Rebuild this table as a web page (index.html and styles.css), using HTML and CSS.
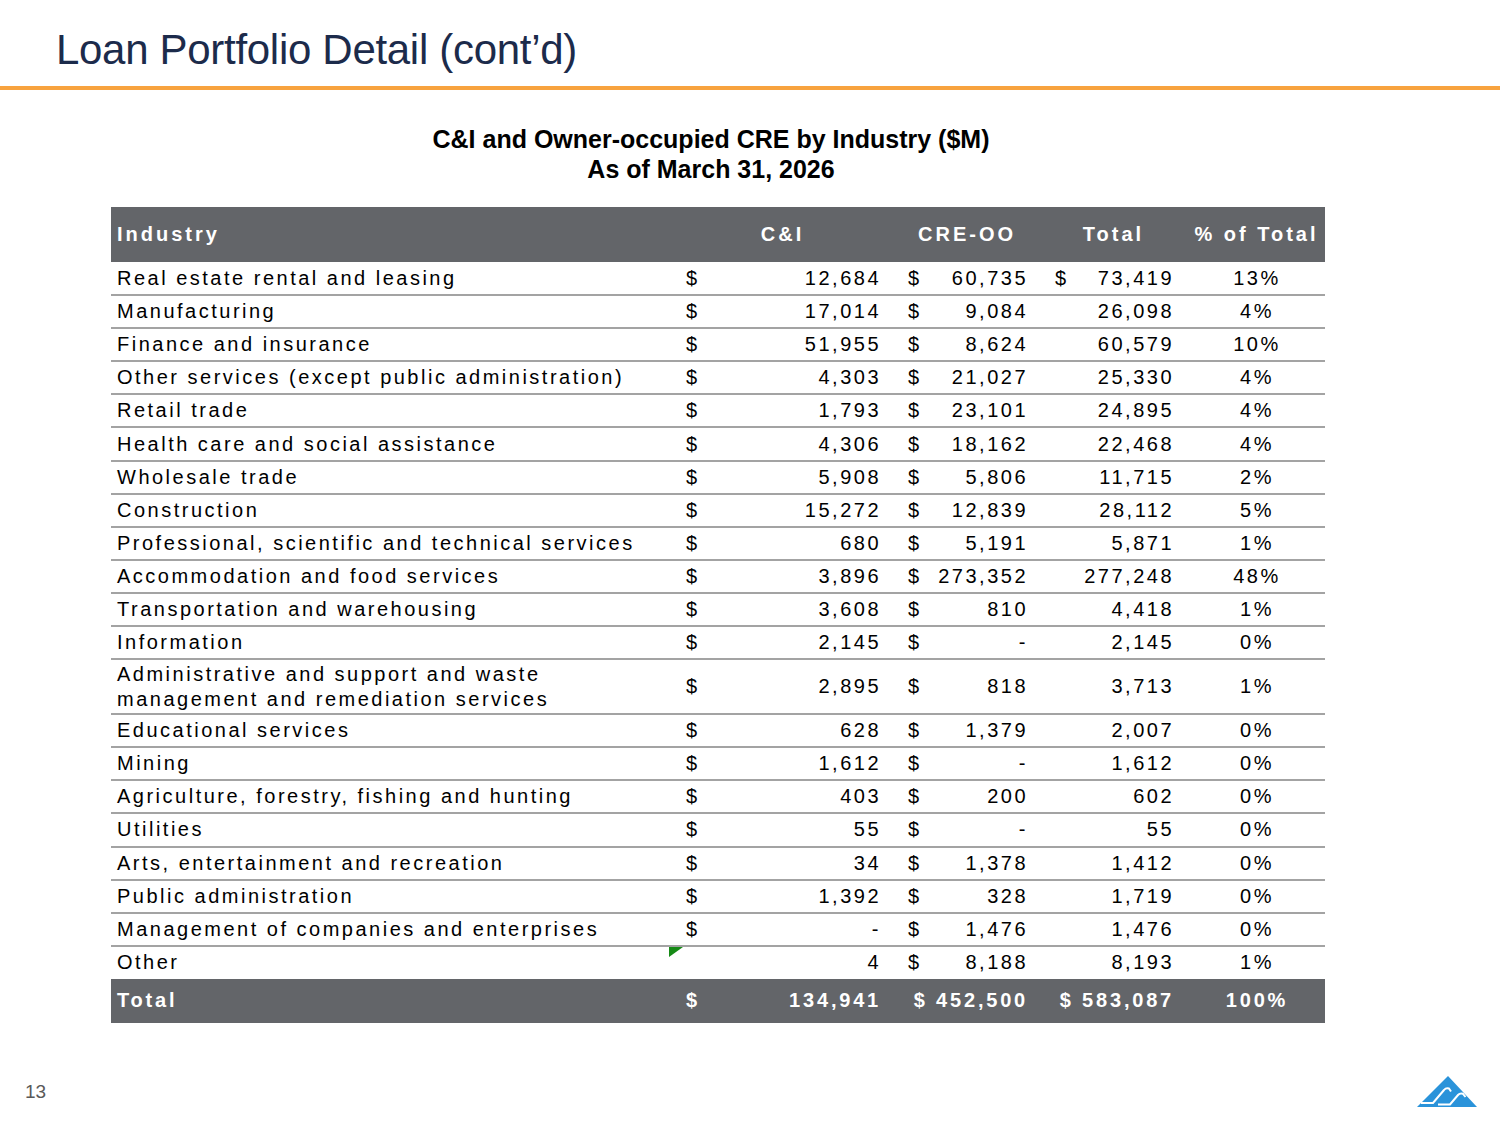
FILE: index.html
```html
<!DOCTYPE html>
<html lang="en">
<head>
<meta charset="utf-8">
<title>Loan Portfolio Detail (cont'd)</title>
<link rel="stylesheet" href="styles.css">
</head>
<body>
<div class="page">
  <h1 class="title">Loan Portfolio Detail (cont’d)</h1>
  <div class="rule"></div>
  <div class="subtitle">C&amp;I and Owner-occupied CRE by Industry ($M)<br>As of March 31, 2026</div>
  <table class="loans">
    <colgroup>
      <col class="c-ind"><col class="c-dol"><col class="c-cni"><col class="c-cre"><col class="c-tot"><col class="c-pct">
    </colgroup>
    <thead>
      <tr class="head">
        <th class="ind">Industry</th>
        <th colspan="2" class="h-cni">C&amp;I</th>
        <th class="h-cre">CRE-OO</th>
        <th class="h-tot">Total</th>
        <th class="h-pct">% of Total</th>
      </tr>
    </thead>
    <tbody>
      <tr><td class="ind">Real estate rental and leasing</td><td class="dol">$</td><td class="num">12,684</td><td class="cur"><span class="d">$</span>60,735</td><td class="cur"><span class="d">$</span>73,419</td><td class="pct">13%</td></tr>
      <tr><td class="ind">Manufacturing</td><td class="dol">$</td><td class="num">17,014</td><td class="cur"><span class="d">$</span>9,084</td><td class="cur">26,098</td><td class="pct">4%</td></tr>
      <tr><td class="ind">Finance and insurance</td><td class="dol">$</td><td class="num">51,955</td><td class="cur"><span class="d">$</span>8,624</td><td class="cur">60,579</td><td class="pct">10%</td></tr>
      <tr><td class="ind">Other services (except public administration)</td><td class="dol">$</td><td class="num">4,303</td><td class="cur"><span class="d">$</span>21,027</td><td class="cur">25,330</td><td class="pct">4%</td></tr>
      <tr><td class="ind">Retail trade</td><td class="dol">$</td><td class="num">1,793</td><td class="cur"><span class="d">$</span>23,101</td><td class="cur">24,895</td><td class="pct">4%</td></tr>
      <tr><td class="ind">Health care and social assistance</td><td class="dol">$</td><td class="num">4,306</td><td class="cur"><span class="d">$</span>18,162</td><td class="cur">22,468</td><td class="pct">4%</td></tr>
      <tr><td class="ind">Wholesale trade</td><td class="dol">$</td><td class="num">5,908</td><td class="cur"><span class="d">$</span>5,806</td><td class="cur">11,715</td><td class="pct">2%</td></tr>
      <tr><td class="ind">Construction</td><td class="dol">$</td><td class="num">15,272</td><td class="cur"><span class="d">$</span>12,839</td><td class="cur">28,112</td><td class="pct">5%</td></tr>
      <tr><td class="ind">Professional, scientific and technical services</td><td class="dol">$</td><td class="num">680</td><td class="cur"><span class="d">$</span>5,191</td><td class="cur">5,871</td><td class="pct">1%</td></tr>
      <tr><td class="ind">Accommodation and food services</td><td class="dol">$</td><td class="num">3,896</td><td class="cur"><span class="d">$</span>273,352</td><td class="cur">277,248</td><td class="pct">48%</td></tr>
      <tr><td class="ind">Transportation and warehousing</td><td class="dol">$</td><td class="num">3,608</td><td class="cur"><span class="d">$</span>810</td><td class="cur">4,418</td><td class="pct">1%</td></tr>
      <tr><td class="ind">Information</td><td class="dol">$</td><td class="num">2,145</td><td class="cur"><span class="d">$</span>-</td><td class="cur">2,145</td><td class="pct">0%</td></tr>
      <tr class="tall"><td class="ind wrap">Administrative and support and waste<br>management and remediation services</td><td class="dol">$</td><td class="num">2,895</td><td class="cur"><span class="d">$</span>818</td><td class="cur">3,713</td><td class="pct">1%</td></tr>
      <tr><td class="ind">Educational services</td><td class="dol">$</td><td class="num">628</td><td class="cur"><span class="d">$</span>1,379</td><td class="cur">2,007</td><td class="pct">0%</td></tr>
      <tr><td class="ind">Mining</td><td class="dol">$</td><td class="num">1,612</td><td class="cur"><span class="d">$</span>-</td><td class="cur">1,612</td><td class="pct">0%</td></tr>
      <tr><td class="ind">Agriculture, forestry, fishing and hunting</td><td class="dol">$</td><td class="num">403</td><td class="cur"><span class="d">$</span>200</td><td class="cur">602</td><td class="pct">0%</td></tr>
      <tr><td class="ind">Utilities</td><td class="dol">$</td><td class="num">55</td><td class="cur"><span class="d">$</span>-</td><td class="cur">55</td><td class="pct">0%</td></tr>
      <tr><td class="ind">Arts, entertainment and recreation</td><td class="dol">$</td><td class="num">34</td><td class="cur"><span class="d">$</span>1,378</td><td class="cur">1,412</td><td class="pct">0%</td></tr>
      <tr><td class="ind">Public administration</td><td class="dol">$</td><td class="num">1,392</td><td class="cur"><span class="d">$</span>328</td><td class="cur">1,719</td><td class="pct">0%</td></tr>
      <tr><td class="ind">Management of companies and enterprises</td><td class="dol">$</td><td class="num">-</td><td class="cur"><span class="d">$</span>1,476</td><td class="cur">1,476</td><td class="pct">0%</td></tr>
      <tr class="last"><td class="ind">Other</td><td class="dol flagged"><span class="flag"></span></td><td class="num">4</td><td class="cur"><span class="d">$</span>8,188</td><td class="cur">8,193</td><td class="pct">1%</td></tr>
    </tbody>
    <tfoot>
      <tr class="total"><td class="ind">Total</td><td class="dol">$</td><td class="num">134,941</td><td class="cur">$ 452,500</td><td class="cur">$ 583,087</td><td class="pct">100%</td></tr>
    </tfoot>
  </table>
  <footer class="footer">
    <span class="pageno">13</span>
    <svg class="logo" width="60" height="31" viewBox="0 0 60 31" aria-label="logo">
      <polygon points="0,31 31,0 60,31" fill="#2a93da"/>
      <path d="M4,27 H16 L27,14 Q29,11.5 32,12.5 L34,15.5" fill="none" stroke="#fff" stroke-width="2"/>
      <path d="M21,28.5 H33 L41,19 Q43,16.8 46,17.8 L48.5,21" fill="none" stroke="#fff" stroke-width="2"/>
    </svg>
  </footer>
</div>
</body>
</html>
```
FILE: styles.css
```css
html, body {
  margin: 0;
  padding: 0;
  background: #ffffff;
}

body {
  font-family: "Liberation Sans", Arial, sans-serif;
  color: #000;
}

.page {
  min-height: 1125px;
  display: flex;
  flex-direction: column;
}

.title {
  margin: 0;
  padding: 26px 0 0 56px;
  font-size: 42px;
  line-height: 48px;
  font-weight: normal;
  letter-spacing: -0.3px;
  color: #1c2b4b;
}

.rule {
  height: 4px;
  margin-top: 12px;
  background: #f8a33e;
}

.subtitle {
  margin: 34px 0 0 111px;
  width: 1200px;
  text-align: center;
  font-size: 25px;
  line-height: 30px;
  font-weight: bold;
  letter-spacing: 0;
}

.loans {
  margin: 23px 0 0 111px;
  width: 1214px;
  border-collapse: collapse;
  table-layout: fixed;
  font-size: 20px;
  letter-spacing: 2.5px;
  color: #000;
}

.c-ind { width: 569px; }
.c-dol { width: 25px; }
.c-cni { width: 180px; }
.c-cre { width: 147px; }
.c-tot { width: 146px; }
.c-pct { width: 147px; }

.loans th,
.loans td {
  padding: 0;
  white-space: nowrap;
  vertical-align: middle;
}

.head {
  height: 55px;
  background: #636569;
  color: #fff;
}

.head th {
  font-weight: bold;
  letter-spacing: 3px;
  text-align: center;
}

.head th.ind { text-align: left; padding-left: 6px; }
.head .h-cni { padding-left: 0; }
.head .h-cre { padding-left: 17px; }
.head .h-tot { padding-left: 17px; }
.head .h-pct { padding-left: 10px; }

tbody tr {
  height: 33.1px;
  border-bottom: 2px solid #a3a3a3;
}

tbody tr.tall { height: 55px; }
tbody tr.last { border-bottom: none; }

td.ind { padding-left: 6px; }
td.wrap { line-height: 25px; white-space: normal; }

td.dol { padding-left: 6px; }

td.num {
  text-align: right;
  padding-right: 4px;
}

td.cur {
  text-align: right;
  padding-left: 23px;
  padding-right: 4px;
}

td.cur .d { float: left; }

td.pct {
  text-align: center;
  padding-left: 11px;
}

.flagged { position: relative; }

.flag {
  position: absolute;
  left: -11px;
  top: 0;
  width: 0;
  height: 0;
  border-top: 10px solid #168a16;
  border-right: 14px solid transparent;
}

.total {
  height: 44px;
  background: #636569;
  color: #fff;
  font-weight: bold;
  letter-spacing: 2.8px;
}

.total td.num,
.total td.cur { padding-right: 4px; }

.footer {
  margin-top: auto;
  display: flex;
  justify-content: space-between;
  align-items: center;
  padding: 0 23px 18px 25px;
  height: 31px;
}

.pageno {
  font-size: 19px;
  line-height: 19px;
  color: #595959;
}

.logo { display: block; }
```
